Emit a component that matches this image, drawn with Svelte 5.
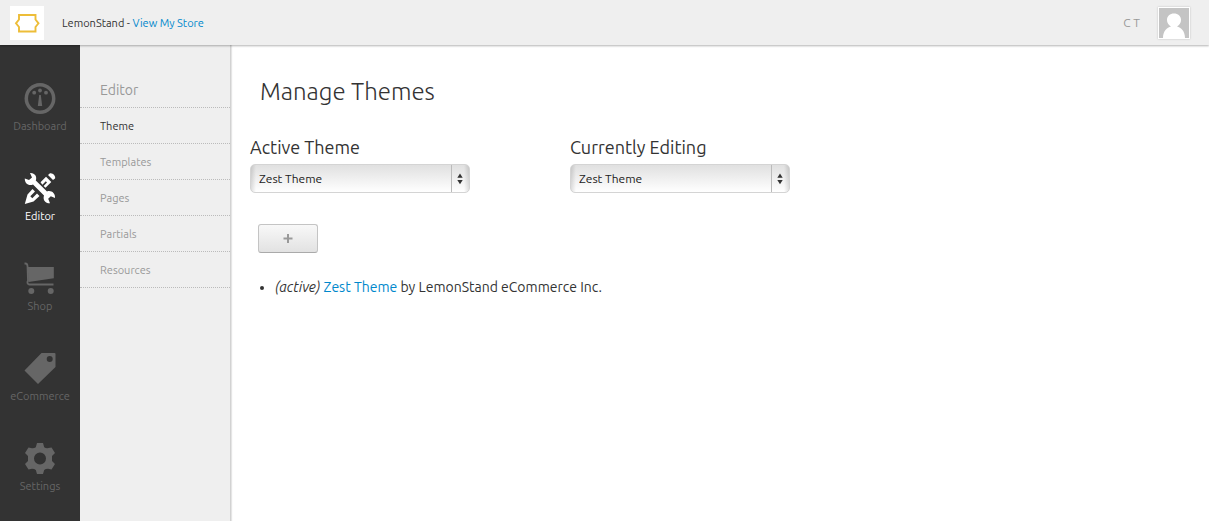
<script>
  const sections = ['Dashboard', 'Editor', 'Shop', 'eCommerce', 'Settings'];
  const pages = ['Theme', 'Templates', 'Pages', 'Partials', 'Resources'];
  const pickers = [
    { id: 'active-theme', label: 'Active Theme' },
    { id: 'editing-theme', label: 'Currently Editing' }
  ];
  let section = $state('Editor');
  let page = $state('Theme');
</script>

<div class="app">
  <header>
    <a class="logo" href="#home" aria-label="LemonStand">
      <svg width="34" height="34" viewBox="0 0 34 34">
        <path d="M9 9H25.500V13.500L28.500 17.300L25.500 21V25.500H9V21L6 17.300L9 13.500Z" fill="none" stroke="#edbd38" stroke-width="1.900" />
      </svg>
    </a>
    <p class="store">LemonStand - <a href="#store">View My Store</a></p>
    <span class="user">C T</span>
    <a class="avatar" href="#account" aria-label="Account">
      <svg width="30" height="30" viewBox="0 0 30 30">
        <rect width="30" height="30" fill="#c4c4c4" />
        <path d="M4 30C4 23 8 19.500 12 18.500C9.500 17 8 15 8 12C8 8 11 5.500 15 5.500S22 8 22 12C22 15 20.500 17 18 18.500C22 19.500 26 23 26 30Z" fill="#fff" />
      </svg>
    </a>
  </header>

  <div class="body">
    <nav class="sections" aria-label="Sections">
      {#each sections as name}
        <a href="#{name}" class:current={section === name} onclick={() => (section = name)}>
          <svg width="32" height="32" viewBox="0 0 32 32" fill="currentColor" aria-hidden="true">
            {#if name === 'Dashboard'}
              <circle cx="16" cy="16.500" r="13.700" fill="none" stroke="currentColor" stroke-width="3.500" />
              <circle cx="10.200" cy="10.700" r="1.900" />
              <circle cx="16" cy="8.500" r="1.900" />
              <circle cx="22" cy="10.700" r="1.900" />
              <path d="M15.200 13H16.800L18.200 24H13.800Z" />
            {:else if name === 'Editor'}
              <path d="M.800 6.500L5 8L8 5.500L6 1C10.500 .500 13.500 4.500 11.800 8.500L23 19.500C27 18 31.500 21 31 26L26.800 24.200L24.200 26.800L26 31.300C21.500 31.500 18.500 28 20 23.500L9 12.500C4.500 14.500 .500 11 .800 6.500Z" />
              <path d="M24 3L26 1.300C28.500 .500 32 4 31 6.500L29 8Z" />
              <path d="M22 4.800L27.300 10L21.500 15.800L19.600 13.900L23 10.500L21.800 9.300L18.400 12.700L16.500 10.300Z" />
              <path d="M8.500 17L11 19.500L6.300 24.200L8.300 26.200L13 21.500L15.500 24L9.500 29.500L.800 32L3.500 22.500Z" />
            {:else if name === 'Shop'}
              <path d="M.500 1.500H1.500Q3.200 1.500 3.500 4L4 18.500Q2.500 21.500 5 22.500H29.500" fill="none" stroke="currentColor" stroke-width="1.800" />
              <path d="M3.800 5H29.800V16.300L4.500 20Z" />
              <circle cx="7.300" cy="29" r="3" />
              <circle cx="26.700" cy="29" r="3" />
            {:else if name === 'eCommerce'}
              <path fill-rule="evenodd" d="M17.500 1H30.500Q31.500 1 31.500 2V15L14 32L.500 18.500ZM25.700 4A3 3 0 1 0 25.700 10A3 3 0 1 0 25.700 4Z" />
            {:else}
              <path fill-rule="evenodd" d="M13 1H19L20.200 5.200Q22 6.500 24.500 6L27.500 5.500L31 11L28 14V19L31 22L27.500 27.500L24 26.700Q21.500 26.700 20.200 28L19 32H13L11.800 28Q10.500 26.700 8 26.700L4.500 27.500L1 22L4 19V14L1 11L4.500 5.500L8 6.200Q10 6.500 11.800 5.200ZM16 10.500A6 6 0 1 0 16 22.500A6 6 0 1 0 16 10.500Z" />
            {/if}
          </svg>
          <span>{name}</span>
        </a>
      {/each}
    </nav>

    <nav class="pages" aria-label="Editor">
      <h2>Editor</h2>
      {#each pages as name}
        <a href="#{name}" class:current={page === name} onclick={() => (page = name)}>{name}</a>
      {/each}
    </nav>

    <main>
      <h1>Manage Themes</h1>
      <div class="pickers">
        {#each pickers as picker}
          <div class="picker">
            <label for={picker.id}>{picker.label}</label>
            <div class="select">
              <select id={picker.id}>
                <option>Zest Theme</option>
              </select>
              <svg width="18" height="27" viewBox="0 0 18 27" aria-hidden="true">
                <path d="M0.500 0V27" stroke="#bbb" />
                <path d="M9 8.500L11.700 12.700H6.300ZM9 19.300L11.700 15H6.300Z" fill="#333" />
              </svg>
            </div>
          </div>
        {/each}
      </div>
      <button type="button" aria-label="Add theme">
        <svg width="10" height="10" viewBox="0 0 10 10"><path d="M5 0V9M.500 4.500H9.500" stroke="#999" stroke-width="2" /></svg>
      </button>
      <ul>
        <li><em>(active)</em> <a href="#zest">Zest Theme</a> by LemonStand eCommerce Inc.</li>
      </ul>
    </main>
  </div>
</div>

<style>
  .app {
    min-height: 100vh;
    display: flex;
    flex-direction: column;
    background: #fff;
    color: #333;
    font-family: Ubuntu, "Noto Sans", "Open Sans", sans-serif;
    font-size: 14px;
  }
  a { color: #0088cc; text-decoration: none; }
  header {
    position: relative;
    display: flex;
    align-items: center;
    height: 45px;
    padding: 0 19px 0 10px;
    box-sizing: border-box;
    background: #efefef;
    box-shadow: 0 1px 2px rgba(0, 0, 0, 0.3);
  }
  .logo { display: flex; background: #fff; }
  .store { margin: 0 auto 0 18px; font-size: 11px; }
  .user { margin-right: 18px; color: #999; font-size: 12px; }
  .avatar { display: flex; border: 1px solid #fff; box-shadow: 0 0 2px rgba(0, 0, 0, 0.2); }
  .body { flex: 1; display: flex; }
  .sections {
    flex: none;
    width: 80px;
    padding-top: 37px;
    background: #333;
  }
  .sections a {
    display: flex;
    flex-direction: column;
    align-items: center;
    height: 90px;
    color: #666;
    font-size: 11px;
    line-height: 16px;
  }
  .sections span { margin-top: 4px; }
  .sections .current { color: #fff; }
  .pages {
    flex: none;
    width: 150px;
    background: #efefef;
    border-right: 1px solid #d2d2d2;
    box-shadow: 1px 0 1px rgba(0, 0, 0, 0.1);
  }
  .pages h2, .pages a {
    display: block;
    margin: 0;
    padding: 2px 0 0 20px;
    border-bottom: 1px dotted #bbb;
    color: #999;
    font-size: 11px;
    font-weight: 400;
    line-height: 33px;
  }
  .pages h2 { padding-top: 29px; font-size: 14px; }
  .pages .current { color: #333; }
  main { flex: 1; padding: 27px 19px; }
  h1 {
    margin: 0 10px;
    font-size: 24px;
    font-weight: 300;
    line-height: 40px;
  }
  .pickers { display: flex; flex-wrap: wrap; gap: 100px; margin-top: 20px; }
  .picker { width: 220px; }
  label { display: block; font-size: 18px; line-height: 30px; }
  .select { position: relative; margin-top: 2px; }
  .select svg { position: absolute; top: 1px; right: 1px; pointer-events: none; }
  select {
    display: block;
    width: 100%;
    height: 29px;
    padding: 0 24px 0 8px;
    appearance: none;
    border: 1px solid #d4d4d4;
    border-radius: 5px;
    background:
      linear-gradient(90deg, rgba(0, 0, 0, 0.12), transparent 5px, transparent calc(100% - 5px), rgba(0, 0, 0, 0.12)),
      linear-gradient(#e0e0e0, #fff);
    color: #222;
    font: inherit;
    font-size: 12px;
  }
  button {
    display: flex;
    align-items: center;
    justify-content: center;
    width: 60px;
    height: 29px;
    margin: 31px 8px 0;
    padding: 0;
    border: 1px solid #c4c4c4;
    border-bottom-color: #aaa;
    border-radius: 3px;
    background: linear-gradient(#f8f8f8, #e2e2e2);
  }
  ul { margin: 24px 0 0; padding-left: 25px; line-height: 20px; }
</style>
